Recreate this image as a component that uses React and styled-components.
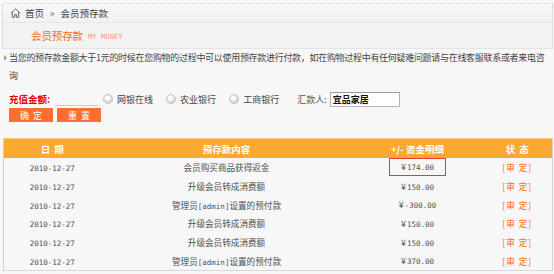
import React from 'react';
import styled, { createGlobalStyle } from 'styled-components';

const Global = createGlobalStyle`
  html, body {
    margin: 0;
    padding: 0;
    background: #f7f7f7;
  }
  body {
    font-family: "Noto Sans CJK SC", "Noto Sans", sans-serif;
    font-size: 9px;
    color: #444;
  }
`;

const Page = styled.div`
  width: 554px;
  height: 274px;
  overflow: hidden;
  padding-top: 3px;
  box-sizing: border-box;
`;

const Head = styled.div`
  margin: 0 1px 0 2px;
  border-left: 1px solid #dcdcdc;
  border-right: 1px solid #dcdcdc;
  border-top: 1px dotted #d6d6d6;
`;

const Crumb = styled.div`
  height: 18px;
  display: flex;
  align-items: center;
  gap: 4px;
  padding-left: 7px;
  color: #444;
  font-size: 9.5px;
  background: linear-gradient(#f7f7f7 0 45%, transparent 45%),
    repeating-conic-gradient(#efefef 0 25%, #f7f7f7 0 50%) 0 0 / 2px 2px;
  border-bottom: 1px solid #e6e6e6;
`;

const Sep = styled.span`
  color: #666;
  margin: 0 2px;
`;

const TitleBar = styled.div`
  height: 25px;
  display: flex;
  align-items: center;
  gap: 5px;
  padding-left: 28px;
  background: repeating-conic-gradient(#eeeeee 0 25%, #f8f8f8 0 50%) 0 0 / 2px 2px;
  border-bottom: 1px solid #e4e4e4;
`;

const Title = styled.span`
  color: #f66a1e;
  font-size: 10.5px;
  letter-spacing: -0.1px;
`;

const SubTitle = styled.span`
  color: #f8a07a;
  font-family: "DejaVu Sans Mono", "Liberation Mono", monospace;
  font-size: 7.2px;
  padding-top: 2px;
`;

const Intro = styled.p`
  position: relative;
  margin: 0;
  width: 540px;
  padding: 0 0 0 9px;
  line-height: 18px;
  font-size: 9px;
  letter-spacing: -0.3px;
  color: #444;
  &::before {
    content: "";
    position: absolute;
    left: 4px;
    top: 6px;
    border-left: 3px solid #999;
    border-top: 3px solid transparent;
    border-bottom: 3px solid transparent;
  }
`;

const FormRow = styled.div`
  display: flex;
  align-items: center;
  height: 16px;
  margin-top: 6px;
  padding-left: 9px;
`;

const Label = styled.span`
  color: #e00;
  font-weight: bold;
  font-size: 9.5px;
  margin-right: 5px;
`;

const LineInput = styled.span`
  width: 43px;
  height: 12px;
  border-bottom: 1px solid #ccc;
  margin-right: 5px;
`;

const Radio = styled.label`
  display: flex;
  align-items: center;
  gap: 4px;
  margin-right: ${(p) => p.$gap}px;
  color: #444;
  font-size: 9px;
`;

const Dot = styled.span`
  width: 8px;
  height: 8px;
  border-radius: 50%;
  border: 1px solid #c4c4c4;
  background: radial-gradient(circle at 40% 35%, #fdfdfd 0 20%, #d3d3d3 70%, #bdbdbd);
`;

const Payer = styled.span`
  color: #555;
  font-size: 9px;
  margin-right: 3px;
`;

const Box = styled.span`
  width: 66px;
  height: 13px;
  border: 1px solid #b5b5b5;
  border-top-color: #999;
  background: #fff;
  padding-left: 2px;
  display: flex;
  align-items: center;
  font-weight: bold;
  color: #111;
  font-size: 9px;
`;

const Buttons = styled.div`
  display: flex;
  gap: 4px;
  padding-left: 9px;
  margin-top: 1px;
`;

const Btn = styled.span`
  width: 44px;
  height: 14px;
  display: flex;
  align-items: center;
  justify-content: center;
  color: #fff;
  font-size: 9px;
  letter-spacing: 4px;
  text-indent: 4px;
  background: repeating-conic-gradient(#f7652b 0 25%, #fa7a3c 0 50%) 0 0 / 2px 2px;
`;

const Table = styled.table`
  margin: 16px 0 0 3px;
  width: 550px;
  border-collapse: collapse;
  table-layout: fixed;
  border-left: 1px solid #d2d2d2;
  border-right: 1px solid #d2d2d2;
  border-bottom: 1px solid #d8d8d8;
`;

const Th = styled.th`
  height: 19px;
  padding: 0;
  color: #fff;
  font-weight: bold;
  font-size: 9.5px;
  background: repeating-conic-gradient(#f8a327 0 25%, #faad3a 0 50%) 0 0 / 2px 2px;
  border-top: 1px solid #fcc878;
  letter-spacing: ${(p) => (p.$wide ? '4px' : '0')};
  text-indent: ${(p) => (p.$wide ? '4px' : '0')};
`;

const Td = styled.td`
  height: 18.7px;
  padding: 0;
  text-align: center;
  color: ${(p) => (p.$status ? '#f26d1f' : '#505050')};
  font-size: 8.6px;
  letter-spacing: ${(p) => (p.$status ? '1px' : '0')};
`;

const Mono = styled.span`
  font-family: "DejaVu Sans Mono", "Liberation Mono", monospace;
  font-size: 7.5px;
  letter-spacing: 0;
`;

const Yen = styled.span`
  font-size: 9px;
  margin-right: 1px;
`;

const Marked = styled.span`
  display: inline-block;
  border: 1px solid #e23b3b;
  padding: 0 11px;
  line-height: 15px;
`;

const HomeIcon = () => (
  <svg width="11" height="10" viewBox="0 0 11 10" fill="none" stroke="#666" strokeWidth="1">
    <path d="M0.8 5.2 L5.5 0.9 L10.2 5.2" />
    <path d="M2.3 4.2 V9.3 H4.6 V6.6 H6.4 V9.3 H8.7 V4.2" />
  </svg>
);

const rows = [
  { date: '2010-12-27', text: ['会员购买商品获得返金'], money: '174.00', marked: true },
  { date: '2010-12-27', text: ['升级会员转成消费额'], money: '150.00' },
  { date: '2010-12-27', text: ['管理员', '[admin]', '设置的预付款'], money: '-300.00' },
  { date: '2010-12-27', text: ['升级会员转成消费额'], money: '150.00' },
  { date: '2010-12-27', text: ['升级会员转成消费额'], money: '150.00' },
  { date: '2010-12-27', text: ['管理员', '[admin]', '设置的预付款'], money: '370.00' },
];

const Content = ({ parts }) => (
  <>
    {parts.map((p, i) => (i === 1 ? <Mono key={i}>{p}</Mono> : <span key={i}>{p}</span>))}
  </>
);

const Money = ({ value }) => (
  <>
    <Yen>¥</Yen>
    <Mono>{value}</Mono>
  </>
);

const App = () => {
  return (
    <Page>
      <Global />
      <Head>
        <Crumb>
          <HomeIcon />
          <span>首页</span>
          <Sep>»</Sep>
          <span>会员预存款</span>
        </Crumb>
        <TitleBar>
          <Title>会员预存款</Title>
          <SubTitle>MY MONEY</SubTitle>
        </TitleBar>
      </Head>

      <Intro>
        当您的预存款金额大于1元的时候在您购物的过程中可以使用预存款进行付款，如在购物过程中有任何疑难问题请与在线客服联系或者来电咨询
      </Intro>

      <FormRow>
        <Label>充值金额:</Label>
        <LineInput />
        <Radio $gap={13}><Dot />网银在线</Radio>
        <Radio $gap={13}><Dot />农业银行</Radio>
        <Radio $gap={18}><Dot />工商银行</Radio>
        <Payer>汇款人:</Payer>
        <Box>宜品家居</Box>
      </FormRow>

      <Buttons>
        <Btn>确定</Btn>
        <Btn>重置</Btn>
      </Buttons>

      <Table>
        <colgroup>
          <col style={{ width: 97 }} />
          <col style={{ width: 252 }} />
          <col style={{ width: 130 }} />
          <col style={{ width: 70 }} />
        </colgroup>
        <thead>
          <tr>
            <Th $wide>日期</Th>
            <Th>预存款内容</Th>
            <Th>+/- 资金明细</Th>
            <Th $wide>状态</Th>
          </tr>
        </thead>
        <tbody>
          {rows.map((r, i) => (
            <tr key={i}>
              <Td><Mono>{r.date}</Mono></Td>
              <Td><Content parts={r.text} /></Td>
              <Td>
                {r.marked ? (
                  <Marked><Money value={r.money} /></Marked>
                ) : (
                  <Money value={r.money} />
                )}
              </Td>
              <Td $status>[审&nbsp;定]</Td>
            </tr>
          ))}
        </tbody>
      </Table>
    </Page>
  );
};

export default App;
